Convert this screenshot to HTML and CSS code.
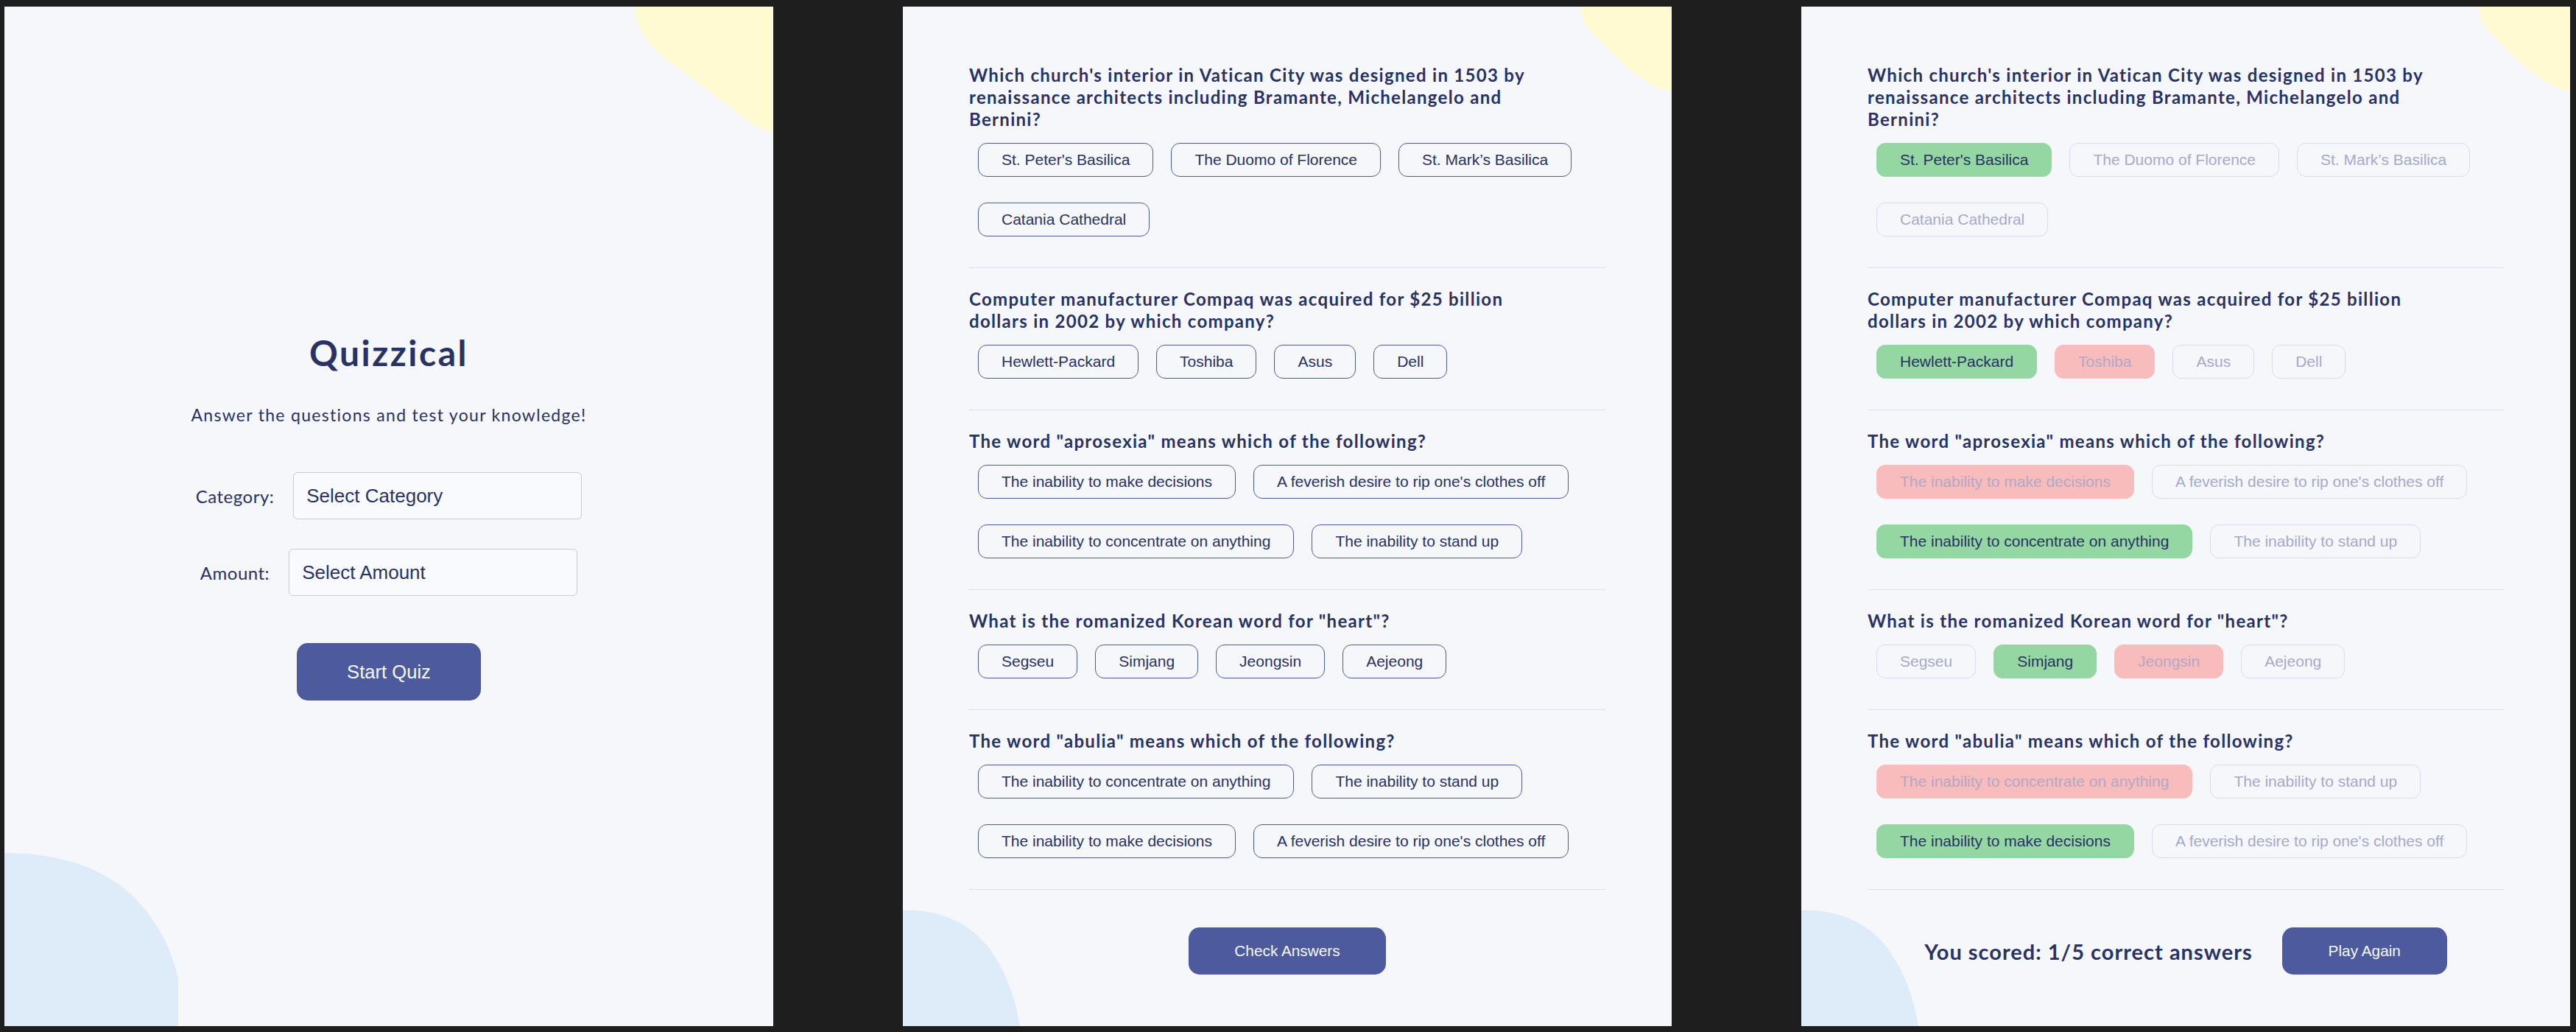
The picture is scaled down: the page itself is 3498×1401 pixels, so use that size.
FILE: index.html
```html
<!DOCTYPE html>
<html lang="en">
<head>
<meta charset="utf-8">
<title>Quizzical</title>
<link rel="stylesheet" href="styles.css">
</head>
<body>
<main class="screens">

  <section class="screen">
    <svg class="blob blob-yellow blob-yellow--start" viewBox="0 0 190 172" preserveAspectRatio="none"><path d="M1,0 C5,30 20,55 50,75 L130,135 C155,155 170,168 190,170 L190,0 Z"/></svg>
    <svg class="blob blob-blue blob-blue--start" viewBox="0 0 237 237" preserveAspectRatio="none"><path d="M0,2 C60,2 120,15 165,52 C200,82 225,125 236,172 L236,237 L0,237 Z"/></svg>
    <div class="start">
      <h1 class="title">Quizzical</h1>
      <p class="subtitle">Answer the questions and test your knowledge!</p>
      <div class="field">
        <label class="field-label" for="cat">Category:</label>
        <select id="cat" class="select select--cat"><option>Select Category</option></select>
      </div>
      <div class="field field--amount">
        <label class="field-label" for="amt">Amount:</label>
        <select id="amt" class="select"><option>Select Amount</option></select>
      </div>
      <button class="btn-primary btn-start">Start Quiz</button>
    </div>
  </section>

  <section class="screen">
    <svg class="blob blob-yellow" viewBox="0 0 126 118" preserveAspectRatio="none"><path d="M1,0 C3,12 6,20 15,32 L50,68 C75,92 100,110 126,116 L126,0 Z"/></svg>
    <svg class="blob blob-blue" viewBox="0 0 160 160" preserveAspectRatio="none"><path d="M0,3 C50,1 90,20 116,53 C135,78 152,115 159,160 L0,160 Z"/></svg>
    <div class="quiz">
      <div class="question">
        <h2 class="q-text">Which church's interior in Vatican City was designed in 1503 by renaissance architects including Bramante, Michelangelo and Bernini?</h2>
        <div class="options">
          <button class="opt">St. Peter's Basilica</button>
          <button class="opt">The Duomo of Florence</button>
          <button class="opt">St. Mark’s Basilica</button>
          <button class="opt">Catania Cathedral</button>
        </div>
      </div>
      <div class="question">
        <h2 class="q-text">Computer manufacturer Compaq was acquired for $25 billion dollars in 2002 by which company?</h2>
        <div class="options">
          <button class="opt">Hewlett-Packard</button>
          <button class="opt">Toshiba</button>
          <button class="opt">Asus</button>
          <button class="opt">Dell</button>
        </div>
      </div>
      <div class="question">
        <h2 class="q-text">The word "aprosexia" means which of the following?</h2>
        <div class="options">
          <button class="opt">The inability to make decisions</button>
          <button class="opt">A feverish desire to rip one's clothes off</button>
          <button class="opt">The inability to concentrate on anything</button>
          <button class="opt">The inability to stand up</button>
        </div>
      </div>
      <div class="question">
        <h2 class="q-text">What is the romanized Korean word for "heart"?</h2>
        <div class="options">
          <button class="opt">Segseu</button>
          <button class="opt">Simjang</button>
          <button class="opt">Jeongsin</button>
          <button class="opt">Aejeong</button>
        </div>
      </div>
      <div class="question">
        <h2 class="q-text">The word "abulia" means which of the following?</h2>
        <div class="options">
          <button class="opt">The inability to concentrate on anything</button>
          <button class="opt">The inability to stand up</button>
          <button class="opt">The inability to make decisions</button>
          <button class="opt">A feverish desire to rip one's clothes off</button>
        </div>
      </div>
      <div class="quiz-footer">
        <button class="btn-primary btn-check">Check Answers</button>
      </div>
    </div>
  </section>

  <section class="screen">
    <svg class="blob blob-yellow" viewBox="0 0 126 118" preserveAspectRatio="none"><path d="M1,0 C3,12 6,20 15,32 L50,68 C75,92 100,110 126,116 L126,0 Z"/></svg>
    <svg class="blob blob-blue" viewBox="0 0 160 160" preserveAspectRatio="none"><path d="M0,3 C50,1 90,20 116,53 C135,78 152,115 159,160 L0,160 Z"/></svg>
    <div class="quiz">
      <div class="question">
        <h2 class="q-text">Which church's interior in Vatican City was designed in 1503 by renaissance architects including Bramante, Michelangelo and Bernini?</h2>
        <div class="options">
          <button class="opt opt--correct">St. Peter's Basilica</button>
          <button class="opt opt--faded">The Duomo of Florence</button>
          <button class="opt opt--faded">St. Mark’s Basilica</button>
          <button class="opt opt--faded">Catania Cathedral</button>
        </div>
      </div>
      <div class="question">
        <h2 class="q-text">Computer manufacturer Compaq was acquired for $25 billion dollars in 2002 by which company?</h2>
        <div class="options">
          <button class="opt opt--correct">Hewlett-Packard</button>
          <button class="opt opt--wrong">Toshiba</button>
          <button class="opt opt--faded">Asus</button>
          <button class="opt opt--faded">Dell</button>
        </div>
      </div>
      <div class="question">
        <h2 class="q-text">The word "aprosexia" means which of the following?</h2>
        <div class="options">
          <button class="opt opt--wrong">The inability to make decisions</button>
          <button class="opt opt--faded">A feverish desire to rip one's clothes off</button>
          <button class="opt opt--correct">The inability to concentrate on anything</button>
          <button class="opt opt--faded">The inability to stand up</button>
        </div>
      </div>
      <div class="question">
        <h2 class="q-text">What is the romanized Korean word for "heart"?</h2>
        <div class="options">
          <button class="opt opt--faded">Segseu</button>
          <button class="opt opt--correct">Simjang</button>
          <button class="opt opt--wrong">Jeongsin</button>
          <button class="opt opt--faded">Aejeong</button>
        </div>
      </div>
      <div class="question">
        <h2 class="q-text">The word "abulia" means which of the following?</h2>
        <div class="options">
          <button class="opt opt--wrong">The inability to concentrate on anything</button>
          <button class="opt opt--faded">The inability to stand up</button>
          <button class="opt opt--correct">The inability to make decisions</button>
          <button class="opt opt--faded">A feverish desire to rip one's clothes off</button>
        </div>
      </div>
      <div class="quiz-footer quiz-footer--result">
        <p class="score">You scored: 1/5 correct answers</p>
        <button class="btn-primary btn-again">Play Again</button>
      </div>
    </div>
  </section>

</main>
</body>
</html>
```

FILE: styles.css
```css
* {
  box-sizing: border-box;
}

html, body {
  margin: 0;
  padding: 0;
}

body {
  background: #1e1e1e;
  width: 3498px;
  height: 1401px;
  overflow: hidden;
}

.screens {
  display: flex;
  gap: 176px;
  padding: 9px 6px;
}

.screen {
  position: relative;
  flex: 0 0 1044px;
  height: 1384px;
  background: #f5f7fb;
  overflow: hidden;
  color: #293264;
}

.blob {
  position: absolute;
  display: block;
}

.blob-yellow path { fill: #fffad1; }
.blob-blue path { fill: #deebf8; }

.blob-yellow {
  top: 0;
  right: 0;
  width: 126px;
  height: 118px;
}

.blob-blue {
  left: 0;
  bottom: 0;
  width: 160px;
  height: 160px;
}

.blob-yellow--start {
  width: 190px;
  height: 172px;
}

.blob-blue--start {
  width: 237px;
  height: 237px;
}

/* ---------- Start screen ---------- */

.start {
  position: relative;
  height: 100%;
  display: flex;
  flex-direction: column;
  align-items: center;
  padding-top: 441px;
}

.title {
  margin: 0;
  font-family: "Lato", "Inter", sans-serif;
  font-weight: 700;
  font-size: 48px;
  line-height: 58px;
  letter-spacing: 2.5px;
  color: #293264;
}

.subtitle {
  margin: 41px 0 0;
  font-family: "Lato", "Inter", sans-serif;
  font-size: 23px;
  line-height: 28px;
  letter-spacing: 1.3px;
  color: #293264;
}

.field {
  display: flex;
  align-items: center;
  justify-content: center;
  gap: 26px;
  margin-top: 64px;
}

.field--amount {
  margin-top: 40px;
}

.field-label {
  font-family: "Lato", "Inter", sans-serif;
  font-size: 24px;
  letter-spacing: 0.5px;
  color: #293264;
}

.select {
  appearance: none;
  -webkit-appearance: none;
  width: 392px;
  height: 64px;
  padding: 0 17px;
  border: 1.5px solid #cacbd3;
  border-radius: 6px;
  background: #f9fafd;
  font-family: "Liberation Sans", Arial, sans-serif;
  font-size: 26px;
  color: #293264;
}

.btn-primary {
  border: none;
  background: #4d5b9e;
  color: #f5f7fb;
  font-family: "Liberation Sans", Arial, sans-serif;
  font-size: 20.8px;
  line-height: 24px;
  border-radius: 15px;
  cursor: pointer;
}

.btn-start {
  margin-top: 64px;
  width: 250px;
  height: 78px;
  font-size: 25.6px;
}

/* ---------- Quiz ---------- */

.quiz {
  position: relative;
  width: 864px;
  margin: 0 auto;
  padding-top: 78px;
}

.question {
  padding: 27px 0 42px;
  border-bottom: 1.5px solid #dbdef0;
}

.question:first-child {
  padding-top: 0;
}

.q-text {
  margin: 0;
  font-family: "Lato", "Inter", sans-serif;
  font-weight: 700;
  font-size: 24px;
  line-height: 30px;
  letter-spacing: 1.3px;
  color: #293264;
  max-width: 790px;
}

.options {
  display: flex;
  flex-wrap: wrap;
  gap: 35px 24px;
  margin: 17px 12px 0;
}

.opt {
  height: 46px;
  padding: 0 31px;
  border: 1.5px solid #4d5b9e;
  border-radius: 12px;
  background: transparent;
  font-family: "Liberation Sans", Arial, sans-serif;
  font-size: 21px;
  line-height: 24px;
  color: #293264;
}

.opt--correct {
  background: #94d7a2;
  border-color: #94d7a2;
  color: #293264;
}

.opt--wrong {
  background: #f8bcbc;
  border-color: #f8bcbc;
  color: #b2a8c6;
}

.opt--faded {
  border-color: #d8dcf2;
  color: #a5aacb;
}

.quiz-footer {
  display: flex;
  justify-content: center;
  align-items: center;
  margin-top: 51px;
}

.btn-check {
  width: 268px;
  height: 64px;
}

.quiz-footer--result {
  gap: 40px;
}

.score {
  margin: 0;
  font-family: "Lato", "Inter", sans-serif;
  font-weight: 700;
  font-size: 29px;
  letter-spacing: 1px;
  color: #293264;
}

.btn-again {
  width: 224px;
  height: 64px;
}
```
